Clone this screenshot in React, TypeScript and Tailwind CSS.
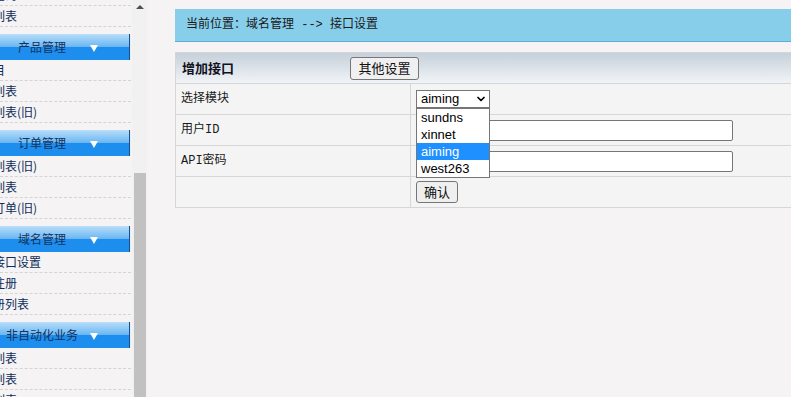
import { ChevronDown } from "lucide-react";

const cjk = "font-['Noto_Sans_CJK_SC',sans-serif]";
const mono = "font-['Liberation_Mono','Noto_Sans_CJK_SC',monospace]";
const arial = "font-['Liberation_Sans',Arial,sans-serif]";

const groups = [
  { title: "", items: ["查询", "列表"] },
  { title: "产品管理", items: ["目", "列表", "列表(旧)"] },
  { title: "订单管理", items: ["列表(旧)", "列表", "订单(旧)"] },
  { title: "域名管理", items: ["接口设置", "注册", "册列表"] },
  { title: "非自动化业务", items: ["列表", "列表", "列表"] },
];

function MenuHeader({ title }: { title: string }) {
  return (
    <div className="mt-[7px] flex h-[26px] w-[131px] items-center bg-[linear-gradient(to_bottom,#b9defa_0%,#68b6f3_50%,#1e8eee_50%,#1e8eee_100%)] shadow-[inset_-1px_0_0_#dff0ff,inset_-2px_0_0_#1b4f8c]">
      <div className="w-[84px] text-center text-[12px] leading-none text-[#13325e]">{title}</div>
      <div className="ml-[6px] mt-[2px] h-0 w-0 border-x-[4px] border-t-[7px] border-x-transparent border-t-white" />
    </div>
  );
}

function Sidebar() {
  return (
    <div className={`relative h-[397px] w-[132px] overflow-hidden ${cjk}`}>
      <div className="-mt-[22px] w-[131px]">
        {groups.map((g, i) => (
          <div key={i}>
            {g.title ? <MenuHeader title={g.title} /> : <div className="h-[7px]" />}
            {g.items.map((it, j) => (
              <div
                key={j}
                className="flex h-[21px] items-center whitespace-nowrap border-b border-dashed border-[#d4d4d4] pl-0 text-[12px] text-[#0f2e5a]"
              >
                <span className="-ml-[7px]">{it}</span>
              </div>
            ))}
          </div>
        ))}
      </div>
    </div>
  );
}

function Scrollbar() {
  return (
    <div className="flex h-[397px] w-[15px] flex-col items-center bg-[#f1f1f1]">
      <div className="mt-[5px] h-0 w-0 border-x-[4px] border-b-[4px] border-x-transparent border-b-[#505050]" />
      <div className="mt-[164px] w-[12px] flex-1 bg-[#c1c1c1]" />
    </div>
  );
}

function Row({ label, children }: { label: string; children?: React.ReactNode }) {
  return (
    <div className="grid h-[31px] grid-cols-[235px_1fr] border-b border-[#d6d6d6]">
      <div className={`flex items-center border-r border-[#d6d6d6] pl-[5px] text-[12px] text-[#1a1a1a] ${mono}`}>
        {label}
      </div>
      <div className="relative flex items-center pl-[5px]">{children}</div>
    </div>
  );
}

function TextInput() {
  return <div className="h-[21px] w-[317px] rounded-[2px] border border-[#767676] bg-white" />;
}

export default function App() {
  return (
    <div className="flex h-[397px] w-[791px] overflow-hidden bg-[#f5f3f3]">
      <Sidebar />
      <Scrollbar />
      <div className="flex-1 pl-[28px] pt-[9px]">
        <div className={`flex h-[33px] items-center border-b border-[#62acd8] bg-[#87ceeb] pl-[11px] text-[12px] text-[#1a1a1a] ${mono}`}>
          当前位置：域名管理 --&gt; 接口设置
        </div>
        <div className="mt-[10px] border-l border-t border-[#d6d6d6] bg-[#f4f4f4]">
          <div className="flex h-[31px] items-center border-b border-[#d6d6d6] bg-[linear-gradient(to_bottom,#c5d0da,#f1f4f7)]">
            <div className={`w-[174px] pl-[6px] text-[13px] font-bold text-[#111122] ${cjk}`}>增加接口</div>
            <button className={`h-[23px] w-[69px] rounded-[3px] border border-[#767676] bg-[#f0f0f0] text-[13px] text-[#111] ${cjk}`}>
              其他设置
            </button>
          </div>
          <Row label="选择模块">
            <div className={`relative z-10 ${arial}`}>
              <div className="flex h-[18px] w-[74px] items-center justify-between border border-[#767676] bg-white pl-[4px] pr-[2px] text-[13px] text-black">
                <span>aiming</span>
                <ChevronDown size={12} strokeWidth={3.5} className="text-black" />
              </div>
              <div className="absolute left-0 top-[18px] w-[74px] border border-[#767676] bg-white text-[13px] text-black">
                <div className="h-[17px] pl-[4px] leading-[17px]">sundns</div>
                <div className="h-[17px] pl-[4px] leading-[17px]">xinnet</div>
                <div className="h-[17px] bg-[#1e90ff] pl-[4px] leading-[17px] text-white">aiming</div>
                <div className="h-[17px] pl-[4px] leading-[17px]">west263</div>
              </div>
            </div>
          </Row>
          <Row label="用户ID">
            <TextInput />
          </Row>
          <Row label="API密码">
            <TextInput />
          </Row>
          <Row label="">
            <button className={`h-[22px] w-[42px] rounded-[3px] border border-[#767676] bg-[#efefef] text-[13px] text-[#111] ${cjk}`}>
              确认
            </button>
          </Row>
        </div>
      </div>
    </div>
  );
}
